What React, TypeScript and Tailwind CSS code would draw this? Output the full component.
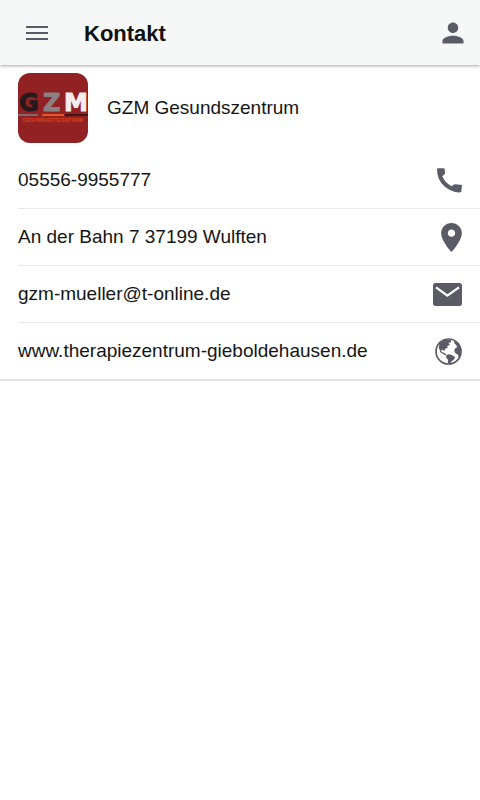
import type { ReactNode } from "react";
import { IoMdPerson, IoMdPin } from "react-icons/io";

type Contact = {
  text: string;
  href: string;
  icon: ReactNode;
};

function PhoneIcon() {
  return (
    <svg viewBox="0 0 75 75" className="size-[25px]" fill="currentColor" aria-hidden="true">
      <path d="M3 1H20Q23 1 23 4L24 15Q24 18 21 20L16 25Q23 44 44 55L49 51Q51 49 54 49L71 50Q75 50 75 53L73 70Q73 73 70 73Q46 75 22 55Q0 35 0 4Q0 1 3 1Z" />
    </svg>
  );
}

function MailIcon() {
  return (
    <svg viewBox="0 0 87 69" className="h-[23px] w-[29px]" aria-hidden="true">
      <rect width="87" height="69" rx="8" fill="currentColor" />
      <path d="M9 13L43 38L78 13" fill="none" stroke="#fff" strokeWidth="7" />
    </svg>
  );
}

function GlobeIcon() {
  return (
    <svg viewBox="0 0 80 80" className="size-[27px]" fill="currentColor" aria-hidden="true">
      <circle cx="40" cy="40" r="37" fill="none" stroke="currentColor" strokeWidth="5" />
      <path d="M14 14L30 5L48 7L47 13L40 14L44 21L36 24L38 29L31 31L28 38L20 34L18 40L26 44L34 49L30 51L16 42L11 28Z" />
      <path d="M33 51L40 48L50 50L60 57L55 65L49 69L45 77L38 75L39 65L33 58Z" />
      <path d="M57 7L70 17L78 34L77 50L71 60L68 49L61 46L57 38L60 30L66 27L62 20L57 15Z" />
    </svg>
  );
}

const contacts: Contact[] = [
  { text: "05556-9955777", href: "tel:055569955777", icon: <PhoneIcon /> },
  {
    text: "An der Bahn 7 37199 Wulften",
    href: "#map",
    // view box trimmed so the pin ends on the same edge as the other icons
    icon: <IoMdPin viewBox="96 32 320 448" className="h-[29px] w-[21px]" />,
  },
  { text: "gzm-mueller@t-online.de", href: "mailto:gzm-mueller@t-online.de", icon: <MailIcon /> },
  { text: "www.therapiezentrum-gieboldehausen.de", href: "#website", icon: <GlobeIcon /> },
];

function Logo() {
  return (
    <svg viewBox="0 0 70 70" className="size-[70px] rounded-xl" role="img" aria-label="GZM">
      <rect width="70" height="70" fill="#912122" />
      <g fontFamily="DejaVu Sans" fontWeight="bold" fontSize="24" strokeWidth="1">
        <text x="1" y="38" fill="#27191b" stroke="#27191b">G</text>
        <text x="25" y="38" fill="#8b8183" stroke="#8b8183">Z</text>
        <text x="46" y="38" fill="#f5eded" stroke="#f5eded">M</text>
      </g>
      <rect y="41" width="20" height="2" fill="#80696b" />
      <rect x="24" y="41" width="22" height="2" fill="#e4581f" />
      <rect x="47" y="41" width="23" height="2" fill="#3d181a" />
      <text x="35" y="49" fill="#d8431c" fontFamily="Liberation Sans" fontWeight="bold" fontSize="5" textAnchor="middle">
        GESUNDHEITSZENTRUM
      </text>
    </svg>
  );
}

function App() {
  return (
    <div className="min-h-screen bg-white font-['Liberation_Sans',Arial,sans-serif] text-[19px] leading-6 text-[#151515]">
      <header className="flex h-[65px] items-center bg-[#f6f8f8] pr-[13px] pl-6 text-[#5b5b66] shadow-[0_1px_3px_rgba(0,0,0,0.35)]">
        <button type="button" aria-label="Menu" className="flex h-7 w-[26px] items-center justify-center">
          <svg viewBox="0 0 22 14" className="h-3.5 w-[22px]" stroke="currentColor" strokeWidth="2">
            <path d="M0 1h22M0 7h22M0 13h22" />
          </svg>
        </button>
        <h1 className="ml-[34px] flex-1 pt-0.5 text-[22px] font-bold text-[#111]">Kontakt</h1>
        <button type="button" aria-label="Profil">
          <IoMdPerson size={28} />
        </button>
      </header>

      <main className="border-b-2 border-[#e3e3e3]">
        <div className="flex items-center gap-[19px] pt-2 pb-2 pl-[18px]">
          <Logo />
          <h2>GZM Gesundszentrum</h2>
        </div>

        <ul className="divide-y divide-[#e9e9e9] pt-px pl-[18px]">
          {contacts.map((contact) => (
            <li key={contact.text}>
              <a href={contact.href} className="flex h-14 items-center justify-between pr-[18px]">
                {contact.text}
                <span className="text-[#5b5b66]">{contact.icon}</span>
              </a>
            </li>
          ))}
        </ul>
      </main>
    </div>
  );
}

export default App;
